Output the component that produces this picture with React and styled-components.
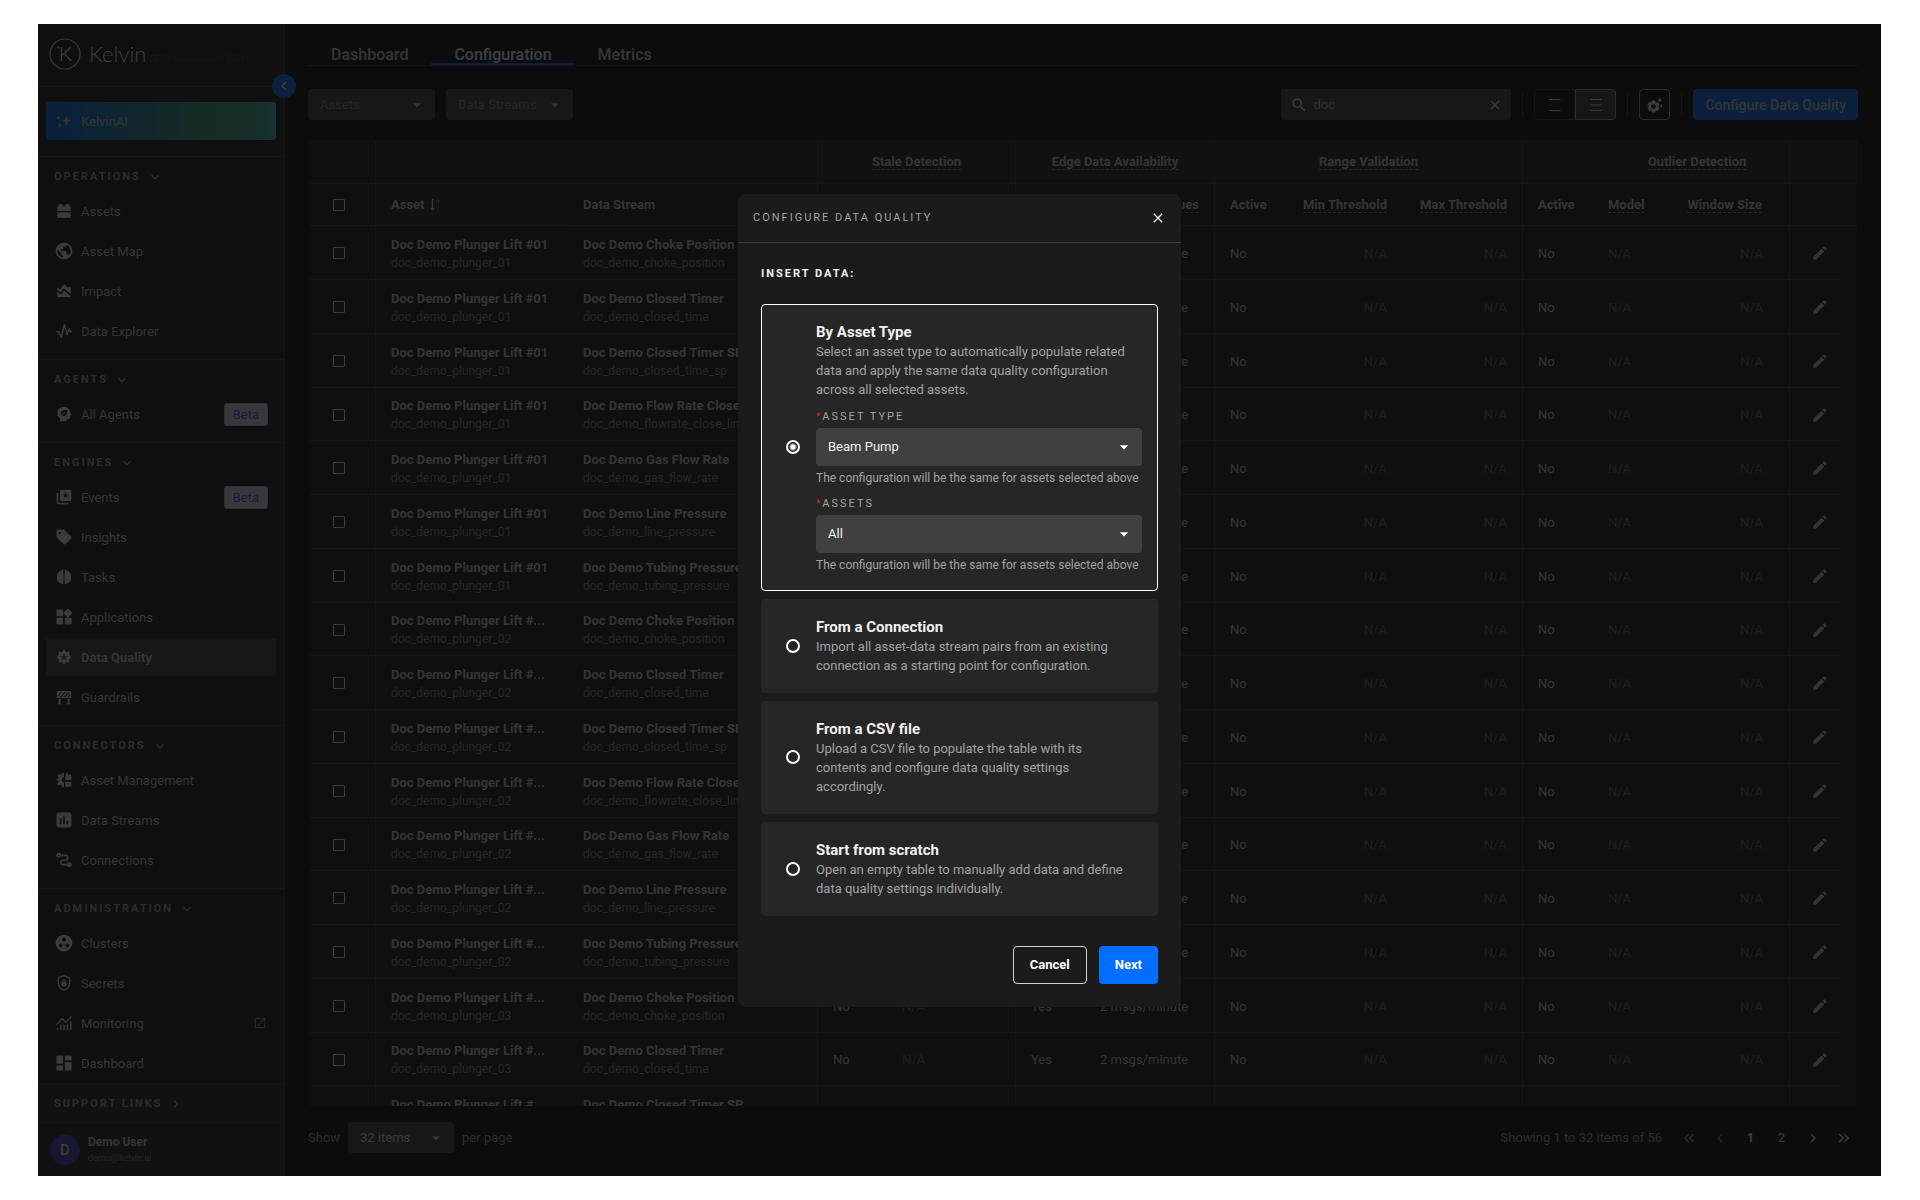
import React, { useState } from 'react';
import styled, { createGlobalStyle, css, ThemeProvider } from 'styled-components';
import {
  MdAreaChart,
  MdArrowDropDown,
  MdAssessment,
  MdChevronLeft,
  MdChevronRight,
  MdClose,
  MdDashboard,
  MdEdit,
  MdGroupWork,
  MdKeyboardArrowDown,
  MdKeyboardDoubleArrowLeft,
  MdKeyboardDoubleArrowRight,
  MdOpenInNew,
  MdPublic,
  MdSearch,
  MdSell,
  MdSettingsSuggest,
  MdWidgets,
} from 'react-icons/md';

const theme = {
  font: 'Roboto, "Open Sans", sans-serif',
  page: '#0c0c0c',
  surface: '#1b1b1b',
  raised: '#262626',
  control: '#404040',
  line: '#3a3a3a',
  text: '#f2f2f2',
  soft: '#d0d0d0',
  muted: '#a3a3a3',
  dim: '#8c8c8c',
  faint: '#606060',
  primary: '#006fff',
  danger: '#d4280f',
};

const GlobalStyle = createGlobalStyle`
  * {
    box-sizing: border-box;
  }

  body {
    margin: 0;
    background: #ffffff;
    font-family: ${theme.font};
    font-size: 13px;
    color: ${theme.text};
  }

  button,
  input,
  select {
    font-family: inherit;
    font-size: inherit;
    color: inherit;
  }

  button {
    cursor: pointer;
  }
`;

/* ---------- icons ---------- */

const Svg = ({ children, size = 16, ...rest }) => (
  <svg width={size} height={size} viewBox="0 0 24 24" fill="currentColor" aria-hidden="true" {...rest}>
    {children}
  </svg>
);

const BrickIcon = () => (
  <Svg>
    <path d="M2 12V6.500C2 5.700 2.700 5 3.500 5H4V3.500C4 2.700 4.700 2 5.500 2h3c.8 0 1.500.7 1.500 1.500V5h4V3.500c0-.8.7-1.500 1.500-1.500h3c.8 0 1.500.7 1.500 1.500V5h.5c.8 0 1.500.7 1.500 1.500V12z" />
    <path d="M2 14h20v6.500c0 .8-.7 1.500-1.500 1.500h-17C2.700 22 2 21.300 2 20.500z" />
  </Svg>
);

const PulseIcon = () => (
  <Svg fill="none" stroke="currentColor" strokeWidth="2.200" strokeLinejoin="round" strokeLinecap="round">
    <path d="M1 13h3.500L8 22l4.500-20 4 15L20 8.500l1.500 4.500H23" />
  </Svg>
);

const AgentIcon = () => (
  <Svg>
    <path
      fillRule="evenodd"
      d="M12 1C6.500 1 2 5.300 2 10.700c0 3.300 1.500 5.800 4 7.600V23h10v-3h2c1.700 0 3-1.300 3-3v-3h1.500c.6 0 1-.7.700-1.200L21.500 10C21.300 5 17.200 1 12 1zm5 4.500c.3 6-2 9.500-6.500 9.500-1 0-1.800-.2-2.500-.6C5.500 9.500 9.500 5 17 5.500z"
    />
    <path d="M7 16c1.500-3.500 4-6 7.500-8-2.500 3-4.500 5.500-6.500 8.500z" />
  </Svg>
);

const EventsIcon = () => (
  <Svg>
    <path
      fillRule="evenodd"
      d="M8 1h13c1.100 0 2 .9 2 2v13c0 1.100-.9 2-2 2H8c-1.100 0-2-.9-2-2V3c0-1.100.9-2 2-2zm6.500 3.500-1.200 3.600H9.500l3.100 2.200-1.200 3.700 3.100-2.300 3.100 2.300-1.200-3.700 3.100-2.200h-3.800z"
    />
    <path d="M1 6h2.500v13.500c0 .6.400 1 1 1H18V23H4c-1.700 0-3-1.300-3-3z" />
  </Svg>
);

const TasksIcon = () => (
  <Svg>
    <path d="M11 1v22H9.500L7 21.500 3.500 19 1.500 16V8l2-3L7 2.500 9.500 1zM13 1v22h1.500l2.500-1.500 3.500-2.500 2-3V8l-2-3L17 2.500 14.500 1z" />
  </Svg>
);

const QualityIcon = () => (
  <Svg>
    <path
      fillRule="evenodd"
      d="m12 .8 3.300 3.300H20v4.600l3.200 3.300-3.200 3.300V20h-4.700L12 23.200 8.700 20H4v-4.700L.8 12 4 8.700V4.100h4.700zm0 5.700-1.400 4H6.500l3.300 2.600L8.600 17l3.400-2.300 3.400 2.300-1.200-3.900 3.300-2.600h-4.100z"
    />
  </Svg>
);

const BarrierIcon = () => (
  <Svg>
    <path
      fillRule="evenodd"
      d="M1 3h22v11H1zm1.800 8.800 6-7H7l-4.200 5zM6 12.300h2l6.500-7.600h-2zm5.300 0h2l6.500-7.600h-2zm5.300 0h2l2.600-3V7z"
    />
    <path d="M4 15h2.500v6H8v2H2.500v-2H4zM17.500 15H20v6h1.500v2H16v-2h1.500z" />
  </Svg>
);

const ManagementIcon = () => (
  <Svg>
    <path d="M12 1v22H9.500L8.600 20l-2.200-1-2.900 1.500L2 17.500l2-2.200-.5-2.300L.8 12v-1l2.900-1.500.5-2L2 5.500 4 3l2.600 1.200L8.800 3 9.500 1z" />
    <circle cx="12" cy="12" r="3.600" fill="#1b1b1b" />
    <path d="M14 12V5h1V3.500C15 2.700 15.500 2 16.500 2S18 2.700 18 3.500V5h1V3.500h2.500V5H23v7zM14 14.500h9V22h-9z" />
  </Svg>
);

const RouteIcon = () => (
  <Svg fill="none" stroke="currentColor" strokeWidth="2.400">
    <circle cx="4" cy="5" r="2.500" />
    <path d="M6.500 5H14a3.700 3.700 0 0 1 0 7.400h-3.500a3.300 3.300 0 0 0 0 6.600H18" />
    <circle cx="20" cy="19" r="2.500" fill="currentColor" />
  </Svg>
);

const ShieldIcon = () => (
  <Svg>
    <path d="M12 1.200 20.500 4v7.500c0 5.300-3.300 9.400-8.500 11.300-5.200-1.900-8.500-6-8.500-11.300V4z" fill="none" stroke="currentColor" strokeWidth="2" />
    <path d="M8.500 11h.8V9.500a2.700 2.700 0 0 1 5.400 0V11h.8v6h-7zm2.300 0h2.400V9.500a1.200 1.200 0 0 0-2.400 0z" />
  </Svg>
);

const MonitoringIcon = () => (
  <Svg>
    <path d="M1 23v-3l2.200-2v5zM6 23v-8l2.200-2v10zM11 23V13l2.200 2.200V23zM16 23v-7.500l2.200-2.200V23zM21 23V10.500l2.200-2.200V23z" />
    <path d="m1 14.500 8.500-9 5.500 5.500 8-9" fill="none" stroke="currentColor" strokeWidth="2" />
  </Svg>
);

const SparkleIcon = () => (
  <Svg>
    <path d="m15.500 4 1.900 5.600L23 11.500l-5.600 1.900-1.900 5.600-1.900-5.600L8 11.500l5.600-1.900z" />
    <path d="m5.500 14.500 1 3 3 1-3 1-1 3-1-3-3-1 3-1zM3.500 4l.8 2.200 2.200.8-2.200.8L3.500 10l-.8-2.200L.5 7l2.200-.8z" />
  </Svg>
);

const SortIcon = () => (
  <svg width="12" height="14" viewBox="0 0 12 14" fill="none" stroke="currentColor" aria-hidden="true">
    <path d="M3.500 1v11M1.500 10l2 2 2-2" strokeWidth="1.300" />
    <path d="M9.500 13V2M7.500 4l2-2 2 2" strokeWidth="1" opacity="0.400" />
  </svg>
);

const RowsIcon = ({ lines }) => (
  <Svg size={12} fill="none" stroke="currentColor" strokeWidth="2">
    <path d={lines === 2 ? 'M1 1h22M1 23h22' : 'M1 1h22M1 12h22M1 23h22'} />
  </Svg>
);

const LogoMark = () => (
  <svg width="32" height="32" viewBox="0 0 32 32" fill="none" aria-hidden="true">
    <circle cx="16" cy="16" r="15" stroke="currentColor" strokeWidth="1.200" />
    <path d="M12.500 9v14M22 9l-9 8.500M15 15.500 22.500 23" stroke="currentColor" strokeWidth="1.300" />
    <circle cx="9.500" cy="9.500" r="1" fill="currentColor" />
  </svg>
);

/* ---------- shell ---------- */

const Frame = styled.div`
  min-height: 100vh;
  padding: 24px 39px 24px 38px;
`;

const Shell = styled.div`
  position: relative;
  display: flex;
  height: calc(100vh - 48px);
  overflow: hidden;
  background: ${props => props.theme.page};
`;

const Sidebar = styled.aside`
  position: relative;
  display: flex;
  flex-direction: column;
  flex: 0 0 247px;
  background: ${props => props.theme.surface};
  border-right: 1px solid ${props => props.theme.line};
`;

const Brand = styled.div`
  display: flex;
  align-items: center;
  flex: none;
  height: 63px;
  padding: 0 0 2px 11px;
  border-bottom: 1px solid ${props => props.theme.line};
`;

const BrandName = styled.span`
  margin-left: 8px;
  font-family: Lato, sans-serif;
  font-size: 22px;
  font-weight: 300;
  line-height: 24px;
`;

const BrandNote = styled.span`
  margin-left: 3px;
  padding-top: 10px;
  font-size: 9px;
  color: #3a3a3a;
`;

const Collapse = styled.button`
  position: absolute;
  top: 50px;
  right: -12px;
  z-index: 1;
  display: flex;
  align-items: center;
  justify-content: center;
  width: 24px;
  height: 24px;
  padding: 0;
  border: 0;
  border-radius: 50%;
  background: ${props => props.theme.primary};
`;

const AiWrap = styled.div`
  flex: none;
  padding: 15px 8px 16px;
`;

const AiLink = styled.a`
  display: flex;
  align-items: center;
  gap: 9px;
  height: 38px;
  padding-left: 10px;
  border-radius: 3px;
  background: linear-gradient(90deg, #006fff 0%, #3ca082 64%, #46bebe 100%);
  color: ${props => props.theme.soft};
  text-decoration: none;
`;

const Group = styled.section`
  flex: none;
  padding: 0 8px 9px;
  border-top: 1px solid ${props => props.theme.line};

  &:last-of-type {
    padding-bottom: 1px;
  }
`;

const GroupTitle = styled.button`
  display: flex;
  align-items: center;
  gap: 6px;
  height: 35px;
  padding: 4px 8px 0;
  border: 0;
  background: none;
  font-size: 11px;
  font-weight: 700;
  letter-spacing: 2px;
  text-transform: uppercase;
  color: ${props => props.theme.muted};
`;

const NavList = styled.nav`
  display: flex;
  flex-direction: column;
  gap: 2px;
`;

const NavItem = styled.a`
  display: flex;
  align-items: center;
  gap: 9px;
  height: 38px;
  padding: 0 8px 0 10px;
  border-radius: 3px;
  color: ${props => props.theme.soft};
  text-decoration: none;

  ${props => props.$active && css`
    background: ${props.theme.control};
    font-weight: 700;
  `}
`;

const NavIcon = styled.span`
  display: flex;
  justify-content: center;
  width: 16px;
  color: ${props => props.theme.text};

  svg {
    flex: none;
  }
`;

const NavLabel = styled.span`
  flex: 1;
`;

const Beta = styled.span`
  padding: 0 8px;
  border: 1px solid #c9b8f5;
  border-radius: 3px;
  background: #e8e0f5;
  line-height: 21px;
  color: #7b4ae0;
`;

const External = styled(MdOpenInNew)`
  margin-right: 1px;
  color: ${props => props.theme.dim};
`;

const SidebarFoot = styled.div`
  flex: none;
  margin-top: auto;
  background: ${props => props.theme.raised};
  border-top: 1px solid ${props => props.theme.line};
`;

const FootLinks = styled.div`
  padding: 0 8px;
  height: 38px;
`;

const User = styled.div`
  display: flex;
  align-items: center;
  gap: 8px;
  height: 54px;
  padding-left: 12px;
  border-top: 1px solid ${props => props.theme.line};
`;

const Avatar = styled.span`
  display: flex;
  align-items: center;
  justify-content: center;
  width: 30px;
  height: 30px;
  border-radius: 50%;
  background: linear-gradient(90deg, #5a2dc0, #3a4ad0);
  font-size: 15px;
  font-weight: 500;
  color: ${props => props.theme.text};
`;

const UserName = styled.div`
  font-size: 12px;
  font-weight: 700;
  line-height: 16px;
  color: ${props => props.theme.soft};
`;

const UserMail = styled.div`
  font-size: 9px;
  line-height: 16px;
  color: ${props => props.theme.dim};
`;

/* ---------- main ---------- */

const Main = styled.main`
  display: flex;
  flex-direction: column;
  flex: 1;
  min-width: 0;
  padding: 0 23px;
`;

const Tabs = styled.div`
  display: flex;
  height: 42px;
  border-bottom: 1px solid ${props => props.theme.line};
`;

const Tab = styled.button`
  padding: 22px 23px 0;
  border: 0;
  border-bottom: 2px solid ${props => (props.$active ? props.theme.primary : 'transparent')};
  background: none;
  font-size: 16px;
  font-weight: 500;
  line-height: 18px;
  color: ${props => (props.$active ? '#ffffff' : props.theme.soft)};
`;

const Toolbar = styled.div`
  display: flex;
  align-items: center;
  gap: 11px;
  padding: 23px 0 20px;
`;

const Spacer = styled.div`
  flex: 1;
`;

const SelectWrap = styled.div`
  position: relative;
  width: ${props => props.$width || '100%'};
`;

const NativeSelect = styled.select`
  display: block;
  width: 100%;
  height: ${props => (props.$tall ? '38px' : '31px')};
  padding: 0 32px 0 12px;
  border: 0;
  border-radius: 4px;
  appearance: none;
  background: ${props => props.theme.control};
  color: ${props => (props.$placeholder ? props.theme.dim : props.theme.text)};
`;

const Caret = styled(MdArrowDropDown)`
  position: absolute;
  top: 50%;
  right: 8px;
  margin-top: -10px;
  color: ${props => (props.$dim ? props.theme.soft : '#ffffff')};
  pointer-events: none;
`;

const Search = styled.label`
  display: flex;
  align-items: center;
  gap: 5px;
  width: 230px;
  height: 31px;
  padding: 0 8px 0 9px;
  border-radius: 4px;
  background: ${props => props.theme.control};
  color: ${props => props.theme.text};
`;

const SearchInput = styled.input`
  flex: 1;
  min-width: 0;
  padding: 0;
  border: 0;
  outline: none;
  background: none;
  color: ${props => props.theme.soft};
`;

const PlainButton = styled.button`
  display: flex;
  align-items: center;
  justify-content: center;
  padding: 0;
  border: 0;
  background: none;
  color: inherit;
`;

const Divider = styled.span`
  width: 1px;
  height: 24px;
  background: ${props => props.theme.line};
`;

const Density = styled.div`
  display: flex;
`;

const DensityButton = styled.button`
  display: flex;
  align-items: center;
  justify-content: center;
  width: 41px;
  height: 31px;
  border: 1px solid ${props => (props.$active ? props.theme.muted : props.theme.line)};
  border-radius: ${props => (props.$active ? '0 4px 4px 0' : '4px 0 0 4px')};
  background: ${props => (props.$active ? props.theme.control : 'none')};
  color: ${props => props.theme.text};
`;

const SquareButton = styled(PlainButton)`
  width: 31px;
  height: 31px;
  border: 1px solid ${props => props.theme.muted};
  border-radius: 4px;
`;

const PrimaryButton = styled.button`
  height: ${props => (props.$tall ? '38px' : '31px')};
  padding: 0 ${props => (props.$tall ? '16px' : '12px')};
  border: 0;
  border-radius: 4px;
  background: ${props => props.theme.primary};
  font-size: ${props => (props.$tall ? '13px' : '14px')};
  font-weight: ${props => (props.$tall ? 700 : 500)};
  color: ${props => (props.$tall ? '#ffffff' : props.theme.soft)};
`;

const OutlineButton = styled.button`
  height: 38px;
  padding: 0 16px;
  border: 1px solid ${props => props.theme.soft};
  border-radius: 4px;
  background: none;
  font-weight: 700;
  color: #ffffff;
`;

/* ---------- table ---------- */

const TableBox = styled.div`
  flex: 1;
  min-height: 0;
  margin: 0 1px;
  overflow: hidden;
  background: ${props => props.theme.surface};
`;

const Table = styled.table`
  width: 100%;
  border-collapse: separate;
  border-spacing: 0;
  table-layout: fixed;
`;

const HeadCell = styled.th`
  height: ${props => (props.$group ? '44px' : '42px')};
  padding: 0 15px 0 ${props => (props.$check ? '24px' : '15px')};
  border-bottom: 1px solid ${props => props.theme.line};
  border-right: ${props => (props.$edge ? `1px solid ${props.theme.line}` : '0')};
  background: ${props => (props.$raised ? props.theme.raised : 'none')};
  font-weight: 700;
  text-align: ${props => props.$align || 'left'};
  white-space: nowrap;
  color: ${props => props.theme.soft};

  ${props => props.$shift && css`
    padding-left: 97px;
  `}

  ${props => props.$wide && css`
    padding-right: 27px;
  `}
`;

const Hint = styled.span`
  border-bottom: 1px dashed ${props => props.theme.dim};
`;

const SortLabel = styled.span`
  display: flex;
  align-items: center;
  gap: 4px;
`;

const Row = styled.tr`
  height: 54px;

  &:nth-child(4n) {
    height: 53px;
  }
`;

const Cell = styled.td`
  padding: 1px 15px 0 ${props => (props.$check ? '24px' : '15px')};
  border-bottom: 1px solid ${props => props.theme.line};
  border-right: ${props => (props.$edge ? `1px solid ${props.theme.line}` : '0')};
  overflow: hidden;
  text-align: ${props => props.$align || 'left'};
  white-space: nowrap;
  color: ${props => (props.$none ? props.theme.faint : props.theme.soft)};

  ${props => props.$wide && css`
    padding-right: 26px;
  `}
`;

const CellName = styled.div`
  padding-top: 1px;
  font-weight: 700;
  line-height: 18px;
`;

const CellCode = styled.div`
  font-size: 12px;
  line-height: 18px;
  color: ${props => props.theme.dim};
`;

const Check = styled.input`
  display: block;
  width: 12px;
  height: 12px;
  margin: 0;
  border: 1px solid ${props => props.theme.text};
  border-radius: 1px;
  appearance: none;
`;

const EditButton = styled(PlainButton)`
  margin-left: 6px;
`;

const Footer = styled.div`
  display: flex;
  align-items: center;
  gap: 8px;
  height: 70px;
  padding-bottom: 7px;
  color: ${props => props.theme.muted};
`;

const Pager = styled.nav`
  display: flex;
  gap: 2px;
  margin-left: 4px;
`;

const PageButton = styled(PlainButton)`
  width: 29px;
  height: 31px;
  font-weight: ${props => (props.$current ? 700 : 400)};
  color: ${props => props.theme.text};

  &:disabled {
    color: ${props => props.theme.dim};
  }
`;

/* ---------- dialog ---------- */

const Backdrop = styled.div`
  position: absolute;
  inset: 0;
  z-index: 10;
  display: flex;
  align-items: center;
  justify-content: center;
  background: rgba(12, 12, 12, 0.8);
`;

const Dialog = styled.form`
  width: 443px;
  border-radius: 8px;
  background: ${props => props.theme.surface};
`;

const DialogHead = styled.header`
  display: flex;
  align-items: center;
  justify-content: space-between;
  height: 49px;
  padding: 0 15px;
  border-bottom: 1px solid ${props => props.theme.line};
`;

const DialogTitle = styled.h2`
  margin: 0;
  font-size: 11px;
  font-weight: 400;
  letter-spacing: 2px;
  text-transform: uppercase;
  color: ${props => props.theme.muted};
`;

const DialogBody = styled.div`
  padding: 21px 23px 23px;
`;

const Lead = styled.div`
  margin-bottom: 20px;
  font-size: 11px;
  font-weight: 700;
  line-height: 20px;
  letter-spacing: 2px;
  text-transform: uppercase;
`;

const Options = styled.div`
  display: flex;
  flex-direction: column;
  gap: 8px;
`;

const Option = styled.div`
  display: flex;
  align-items: center;
  gap: 16px;
  padding: 17px 15px 17px 24px;
  border: 1px solid ${props => (props.$selected ? '#ffffff' : props.theme.raised)};
  border-radius: 4px;
  background: ${props => props.theme.raised};
`;

const Radio = styled.input`
  flex: none;
  width: 14px;
  height: 14px;
  margin: 0;
  padding: 2px;
  border: 2px solid #ffffff;
  border-radius: 50%;
  appearance: none;

  &:checked {
    background: radial-gradient(circle, #ffffff 2px, transparent 4px);
  }
`;

const OptionBody = styled.div`
  flex: 1;
  min-width: 0;
`;

const OptionTitle = styled.label`
  display: block;
  font-size: 15px;
  font-weight: 700;
  line-height: 20px;
`;

const OptionText = styled.p`
  margin: 0;
  padding-right: 12px;
  line-height: 19px;
  color: ${props => props.theme.muted};
`;

const FieldLabel = styled.label`
  display: block;
  padding: 10px 0 3px;
  font-size: 11px;
  line-height: 16px;
  letter-spacing: 2px;
  text-transform: uppercase;
  color: ${props => props.theme.muted};

  &::before {
    content: '*';
    font-size: 10px;
    color: ${props => props.theme.danger};
  }
`;

const FieldHelp = styled.div`
  padding-top: 4px;
  font-size: 12px;
  line-height: 16px;
  white-space: nowrap;
  color: ${props => props.theme.muted};
`;

const Actions = styled.div`
  display: flex;
  justify-content: flex-end;
  gap: 12px;
  margin-top: 30px;
`;

/* ---------- data ---------- */

const navGroups = [
  {
    title: 'Operations',
    items: [
      { label: 'Assets', icon: <BrickIcon /> },
      { label: 'Asset Map', icon: <MdPublic size={20} /> },
      { label: 'Impact', icon: <MdAreaChart size={18} /> },
      { label: 'Data Explorer', icon: <PulseIcon /> },
    ],
  },
  { title: 'Agents', items: [{ label: 'All Agents', icon: <AgentIcon />, beta: true }] },
  {
    title: 'Engines',
    items: [
      { label: 'Events', icon: <EventsIcon />, beta: true },
      { label: 'Insights', icon: <MdSell size={18} /> },
      { label: 'Tasks', icon: <TasksIcon /> },
      { label: 'Applications', icon: <MdWidgets size={20} /> },
      { label: 'Data Quality', icon: <QualityIcon />, active: true },
      { label: 'Guardrails', icon: <BarrierIcon /> },
    ],
  },
  {
    title: 'Connectors',
    items: [
      { label: 'Asset Management', icon: <ManagementIcon /> },
      { label: 'Data Streams', icon: <MdAssessment size={20} /> },
      { label: 'Connections', icon: <RouteIcon /> },
    ],
  },
  {
    title: 'Administration',
    items: [
      { label: 'Clusters', icon: <MdGroupWork size={20} /> },
      { label: 'Secrets', icon: <ShieldIcon /> },
      { label: 'Monitoring', icon: <MonitoringIcon />, external: true },
      { label: 'Dashboard', icon: <MdDashboard size={20} /> },
    ],
  },
];

const streams = [
  ['Doc Demo Choke Position', 'doc_demo_choke_position'],
  ['Doc Demo Closed Timer', 'doc_demo_closed_time'],
  ['Doc Demo Closed Timer SP', 'doc_demo_closed_time_sp'],
  ['Doc Demo Flow Rate Close Limit', 'doc_demo_flowrate_close_limit'],
  ['Doc Demo Gas Flow Rate', 'doc_demo_gas_flow_rate'],
  ['Doc Demo Line Pressure', 'doc_demo_line_pressure'],
  ['Doc Demo Tubing Pressure', 'doc_demo_tubing_pressure'],
];

const rows = Array.from({ length: 17 }, (_, i) => {
  const plunger = Math.floor(i / streams.length) + 1;
  const [stream, streamCode] = streams[i % streams.length];
  return {
    asset: plunger === 1 ? 'Doc Demo Plunger Lift #01' : 'Doc Demo Plunger Lift #...',
    assetCode: `doc_demo_plunger_0${plunger}`,
    stream,
    streamCode,
  };
});

const options = [
  {
    id: 'type',
    title: 'By Asset Type',
    text: 'Select an asset type to automatically populate related data and apply the same data quality configuration across all selected assets.',
  },
  {
    id: 'connection',
    title: 'From a Connection',
    text: 'Import all asset-data stream pairs from an existing connection as a starting point for configuration.',
  },
  {
    id: 'csv',
    title: 'From a CSV file',
    text: 'Upload a CSV file to populate the table with its contents and configure data quality settings accordingly.',
  },
  {
    id: 'scratch',
    title: 'Start from scratch',
    text: 'Open an empty table to manually add data and define data quality settings individually.',
  },
];

/* ---------- parts ---------- */

function Select({ width, value, tall, dim, placeholder, ...rest }) {
  return (
    <SelectWrap $width={width}>
      <NativeSelect $tall={tall} $placeholder={placeholder} defaultValue={value} {...rest}>
        <option>{value}</option>
      </NativeSelect>
      <Caret size={20} $dim={dim} />
    </SelectWrap>
  );
}

function Navigation() {
  return (
    <Sidebar>
      <Brand>
        <LogoMark />
        <BrandName>Kelvin</BrandName>
        <BrandNote>BETA Environment (DEV)</BrandNote>
      </Brand>
      <Collapse type="button" aria-label="Collapse sidebar">
        <MdChevronLeft size={18} />
      </Collapse>
      <AiWrap>
        <AiLink href="#ai">
          <SparkleIcon />
          KelvinAI
        </AiLink>
      </AiWrap>
      {navGroups.map(group => (
        <Group key={group.title}>
          <GroupTitle type="button">
            {group.title}
            <MdKeyboardArrowDown size={16} />
          </GroupTitle>
          <NavList>
            {group.items.map(item => (
              <NavItem key={item.label} href="#nav" $active={item.active}>
                <NavIcon>{item.icon}</NavIcon>
                <NavLabel>{item.label}</NavLabel>
                {item.beta && <Beta>Beta</Beta>}
                {item.external && <External size={14} />}
              </NavItem>
            ))}
          </NavList>
        </Group>
      ))}
      <SidebarFoot>
        <FootLinks>
          <GroupTitle type="button">
            Support links
            <MdChevronRight size={16} />
          </GroupTitle>
        </FootLinks>
        <User>
          <Avatar>D</Avatar>
          <div>
            <UserName>Demo User</UserName>
            <UserMail>demo@kelvin.ai</UserMail>
          </div>
        </User>
      </SidebarFoot>
    </Sidebar>
  );
}

function QualityTable() {
  return (
    <Table>
      <colgroup>
        <col width="67" />
        <col width="192" />
        <col />
        <col width="69" />
        <col width="129" />
        <col width="69" />
        <col width="130" />
        <col width="70" />
        <col width="117" />
        <col width="121" />
        <col width="70" />
        <col width="77" />
        <col width="120" />
        <col width="52" />
        <col width="15" />
      </colgroup>
      <thead>
        <tr>
          <HeadCell $group $edge />
          <HeadCell $group $edge colSpan={2} />
          <HeadCell $group $edge $raised $align="center" colSpan={2}><Hint>Stale Detection</Hint></HeadCell>
          <HeadCell $group $edge $raised $align="center" colSpan={2}><Hint>Edge Data Availability</Hint></HeadCell>
          <HeadCell $group $edge $raised $align="center" colSpan={3}><Hint>Range Validation</Hint></HeadCell>
          <HeadCell $group $edge $raised $shift $align="center" colSpan={3}><Hint>Outlier Detection</Hint></HeadCell>
          <HeadCell $group $raised colSpan={2} />
        </tr>
        <tr>
          <HeadCell $edge $check><Check type="checkbox" aria-label="Select all" /></HeadCell>
          <HeadCell $raised><SortLabel>Asset <SortIcon /></SortLabel></HeadCell>
          <HeadCell $edge>Data Stream</HeadCell>
          <HeadCell>Active</HeadCell>
          <HeadCell $edge><Hint>Window</Hint></HeadCell>
          <HeadCell>Active</HeadCell>
          <HeadCell $edge $align="right"><Hint>Values</Hint></HeadCell>
          <HeadCell>Active</HeadCell>
          <HeadCell $align="right"><Hint>Min Threshold</Hint></HeadCell>
          <HeadCell $edge $align="right"><Hint>Max Threshold</Hint></HeadCell>
          <HeadCell>Active</HeadCell>
          <HeadCell><Hint>Model</Hint></HeadCell>
          <HeadCell $edge $wide $align="right"><Hint>Window Size</Hint></HeadCell>
          <HeadCell colSpan={2} />
        </tr>
      </thead>
      <tbody>
        {rows.map(row => (
          <Row key={row.assetCode + row.streamCode}>
            <Cell $edge $check><Check type="checkbox" aria-label={`Select ${row.stream}`} /></Cell>
            <Cell>
              <CellName>{row.asset}</CellName>
              <CellCode>{row.assetCode}</CellCode>
            </Cell>
            <Cell $edge>
              <CellName>{row.stream}</CellName>
              <CellCode>{row.streamCode}</CellCode>
            </Cell>
            <Cell>No</Cell>
            <Cell $edge $none>N/A</Cell>
            <Cell>Yes</Cell>
            <Cell $edge>2 msgs/minute</Cell>
            <Cell>No</Cell>
            <Cell $none $align="right">N/A</Cell>
            <Cell $edge $none $align="right">N/A</Cell>
            <Cell>No</Cell>
            <Cell $none>N/A</Cell>
            <Cell $edge $none $wide $align="right">N/A</Cell>
            <Cell>
              <EditButton type="button" aria-label="Edit"><MdEdit size={18} /></EditButton>
            </Cell>
          </Row>
        ))}
      </tbody>
    </Table>
  );
}

function ConfigureDialog() {
  const [selected, setSelected] = useState('type');

  return (
    <Backdrop>
      <Dialog role="dialog" aria-labelledby="dialog-title">
        <DialogHead>
          <DialogTitle id="dialog-title">Configure Data Quality</DialogTitle>
          <PlainButton type="button" aria-label="Close"><MdClose size={16} /></PlainButton>
        </DialogHead>
        <DialogBody>
          <Lead>Insert data:</Lead>
          <Options>
            {options.map(option => (
              <Option key={option.id} $selected={selected === option.id}>
                <Radio
                  type="radio"
                  name="source"
                  id={option.id}
                  checked={selected === option.id}
                  onChange={() => setSelected(option.id)}
                />
                <OptionBody>
                  <OptionTitle htmlFor={option.id}>{option.title}</OptionTitle>
                  <OptionText>{option.text}</OptionText>
                  {option.id === 'type' && (
                    <>
                      <FieldLabel htmlFor="asset-type">Asset Type</FieldLabel>
                      <Select id="asset-type" tall value="Beam Pump" />
                      <FieldHelp>The configuration will be the same for assets selected above</FieldHelp>
                      <FieldLabel htmlFor="assets">Assets</FieldLabel>
                      <Select id="assets" tall value="All" />
                      <FieldHelp>The configuration will be the same for assets selected above</FieldHelp>
                    </>
                  )}
                </OptionBody>
              </Option>
            ))}
          </Options>
          <Actions>
            <OutlineButton type="button">Cancel</OutlineButton>
            <PrimaryButton type="button" $tall>Next</PrimaryButton>
          </Actions>
        </DialogBody>
      </Dialog>
    </Backdrop>
  );
}

export default function App() {
  return (
    <ThemeProvider theme={theme}>
      <GlobalStyle />
      <Frame>
        <Shell>
          <Navigation />
          <Main>
            <Tabs>
              <Tab type="button">Dashboard</Tab>
              <Tab type="button" $active>Configuration</Tab>
              <Tab type="button">Metrics</Tab>
            </Tabs>
            <Toolbar>
              <Select width="127px" value="Assets" placeholder dim aria-label="Assets" />
              <Select width="127px" value="Data Streams" placeholder dim aria-label="Data Streams" />
              <Spacer />
              <Search>
                <MdSearch size={18} />
                <SearchInput aria-label="Search" defaultValue="doc" />
                <PlainButton type="button" aria-label="Clear search"><MdClose size={16} /></PlainButton>
              </Search>
              <Divider />
              <Density>
                <DensityButton type="button" aria-label="Comfortable rows"><RowsIcon lines={2} /></DensityButton>
                <DensityButton type="button" aria-label="Compact rows" $active><RowsIcon lines={3} /></DensityButton>
              </Density>
              <Divider />
              <SquareButton type="button" aria-label="Table settings"><MdSettingsSuggest size={18} /></SquareButton>
              <Divider />
              <PrimaryButton type="button">Configure Data Quality</PrimaryButton>
            </Toolbar>
            <TableBox>
              <QualityTable />
            </TableBox>
            <Footer>
              <span>Show</span>
              <Select width="106px" value="32 items" dim aria-label="Items per page" />
              <span>per page</span>
              <Spacer />
              <span>Showing 1 to 32 items of 56</span>
              <Pager>
                <PageButton type="button" aria-label="First page" disabled><MdKeyboardDoubleArrowLeft size={18} /></PageButton>
                <PageButton type="button" aria-label="Previous page" disabled><MdChevronLeft size={18} /></PageButton>
                <PageButton type="button" $current>1</PageButton>
                <PageButton type="button">2</PageButton>
                <PageButton type="button" aria-label="Next page"><MdChevronRight size={18} /></PageButton>
                <PageButton type="button" aria-label="Last page"><MdKeyboardDoubleArrowRight size={18} /></PageButton>
              </Pager>
            </Footer>
          </Main>
          <ConfigureDialog />
        </Shell>
      </Frame>
    </ThemeProvider>
  );
}
